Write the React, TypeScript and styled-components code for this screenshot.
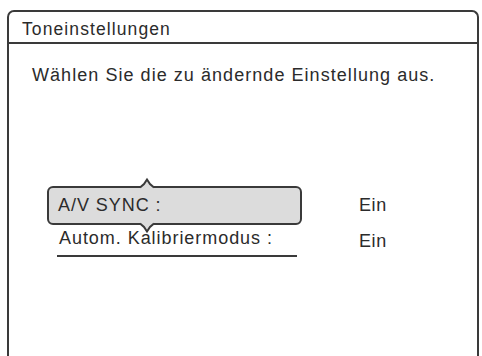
import React from 'react';
import styled, { createGlobalStyle } from 'styled-components';

const GlobalStyle = createGlobalStyle`
    html, body {
        margin: 0;
        padding: 0;
        background: #fff;
        overflow: hidden;
    }
    body {
        font-family: "Liberation Sans", Arial, sans-serif;
        color: #2b2b2b;
    }
`;

const Page = styled.div`
    width: 482px;
    height: 356px;
    padding: 10px 3px 0 7px;
    box-sizing: border-box;
    overflow: hidden;
`;

const Frame = styled.div`
    height: 380px;
    border: 2px solid #3a3a3a;
    border-bottom: none;
    border-radius: 7px 7px 0 0;
    display: flex;
    flex-direction: column;
`;

const TitleBar = styled.div`
    height: 32px;
    display: flex;
    align-items: center;
    padding: 5px 0 0 13px;
    box-sizing: border-box;
    border-bottom: 2px solid #3a3a3a;
    font-size: 17.5px;
    letter-spacing: 1.1px;
`;

const Body = styled.div`
    padding: 21px 0 0 23px;
    display: flex;
    flex-direction: column;
`;

const Prompt = styled.p`
    margin: 0;
    font-size: 18px;
    letter-spacing: 1.05px;
`;

const List = styled.div`
    margin: 100px 0 0 15px;
    display: flex;
    flex-direction: column;
    width: 360px;
`;

const Row = styled.div`
    display: flex;
    align-items: center;
`;

interface ItemProps {
    selected?: boolean
}

const Item = styled.div<ItemProps>`
    position: relative;
    box-sizing: border-box;
    display: flex;
    align-items: center;
    font-size: 18px;
    letter-spacing: 0.95px;
    white-space: nowrap;
    border: ${({ selected }) => (selected ? '2px solid #3a3a3a' : 'none')};
    border-bottom: 2px solid #3a3a3a;
    border-radius: ${({ selected }) => (selected ? '6px' : '0')};
    background: ${({ selected }) => (selected ? '#dcdcdc' : 'transparent')};
    margin-left: ${({ selected }) => (selected ? '0' : '10px')};
    width: ${({ selected }) => (selected ? '255px' : '240px')};
    height: ${({ selected }) => (selected ? '39px' : '32px')};
    padding-left: ${({ selected }) => (selected ? '9px' : '2px')};
    padding-bottom: ${({ selected }) => (selected ? '0' : '3px')};
`;

const Value = styled.span<ItemProps>`
    margin-left: ${({ selected }) => (selected ? '57px' : '62px')};
    font-size: 18px;
    letter-spacing: 0.6px;
`;

interface NotchProps {
    down?: boolean
}

const Notch = styled.svg<NotchProps>`
    position: absolute;
    left: 91px;
    ${({ down }) => (down ? 'bottom: -10px;' : 'top: -10px;')}
    width: 14px;
    height: 10px;
    overflow: visible;
`;

const ArrowUp = () => (
    <Notch viewBox="0 0 14 10">
        <polygon points="0,10 7,2 14,10" fill="#dcdcdc" />
        <polyline points="0,9.5 4,6 7,1.5 10,6 14,9.5" fill="none" stroke="#3a3a3a" strokeWidth="2" />
    </Notch>
);

const ArrowDown = () => (
    <Notch down viewBox="0 0 14 10">
        <polygon points="0,0 7,8 14,0" fill="#dcdcdc" />
        <polyline points="0,0.5 4,4 7,8.5 10,4 14,0.5" fill="none" stroke="#3a3a3a" strokeWidth="2" />
    </Notch>
);

const App = () => {
    return (
        <Page>
            <GlobalStyle />
            <Frame>
                <TitleBar>Toneinstellungen</TitleBar>
                <Body>
                    <Prompt>Wählen Sie die zu ändernde Einstellung aus.</Prompt>
                    <List>
                        <Row>
                            <Item selected>
                                <ArrowUp />
                                A/V SYNC :
                                <ArrowDown />
                            </Item>
                            <Value selected>Ein</Value>
                        </Row>
                        <Row>
                            <Item>Autom. Kalibriermodus :</Item>
                            <Value>Ein</Value>
                        </Row>
                    </List>
                </Body>
            </Frame>
        </Page>
    )
};

export default App;
